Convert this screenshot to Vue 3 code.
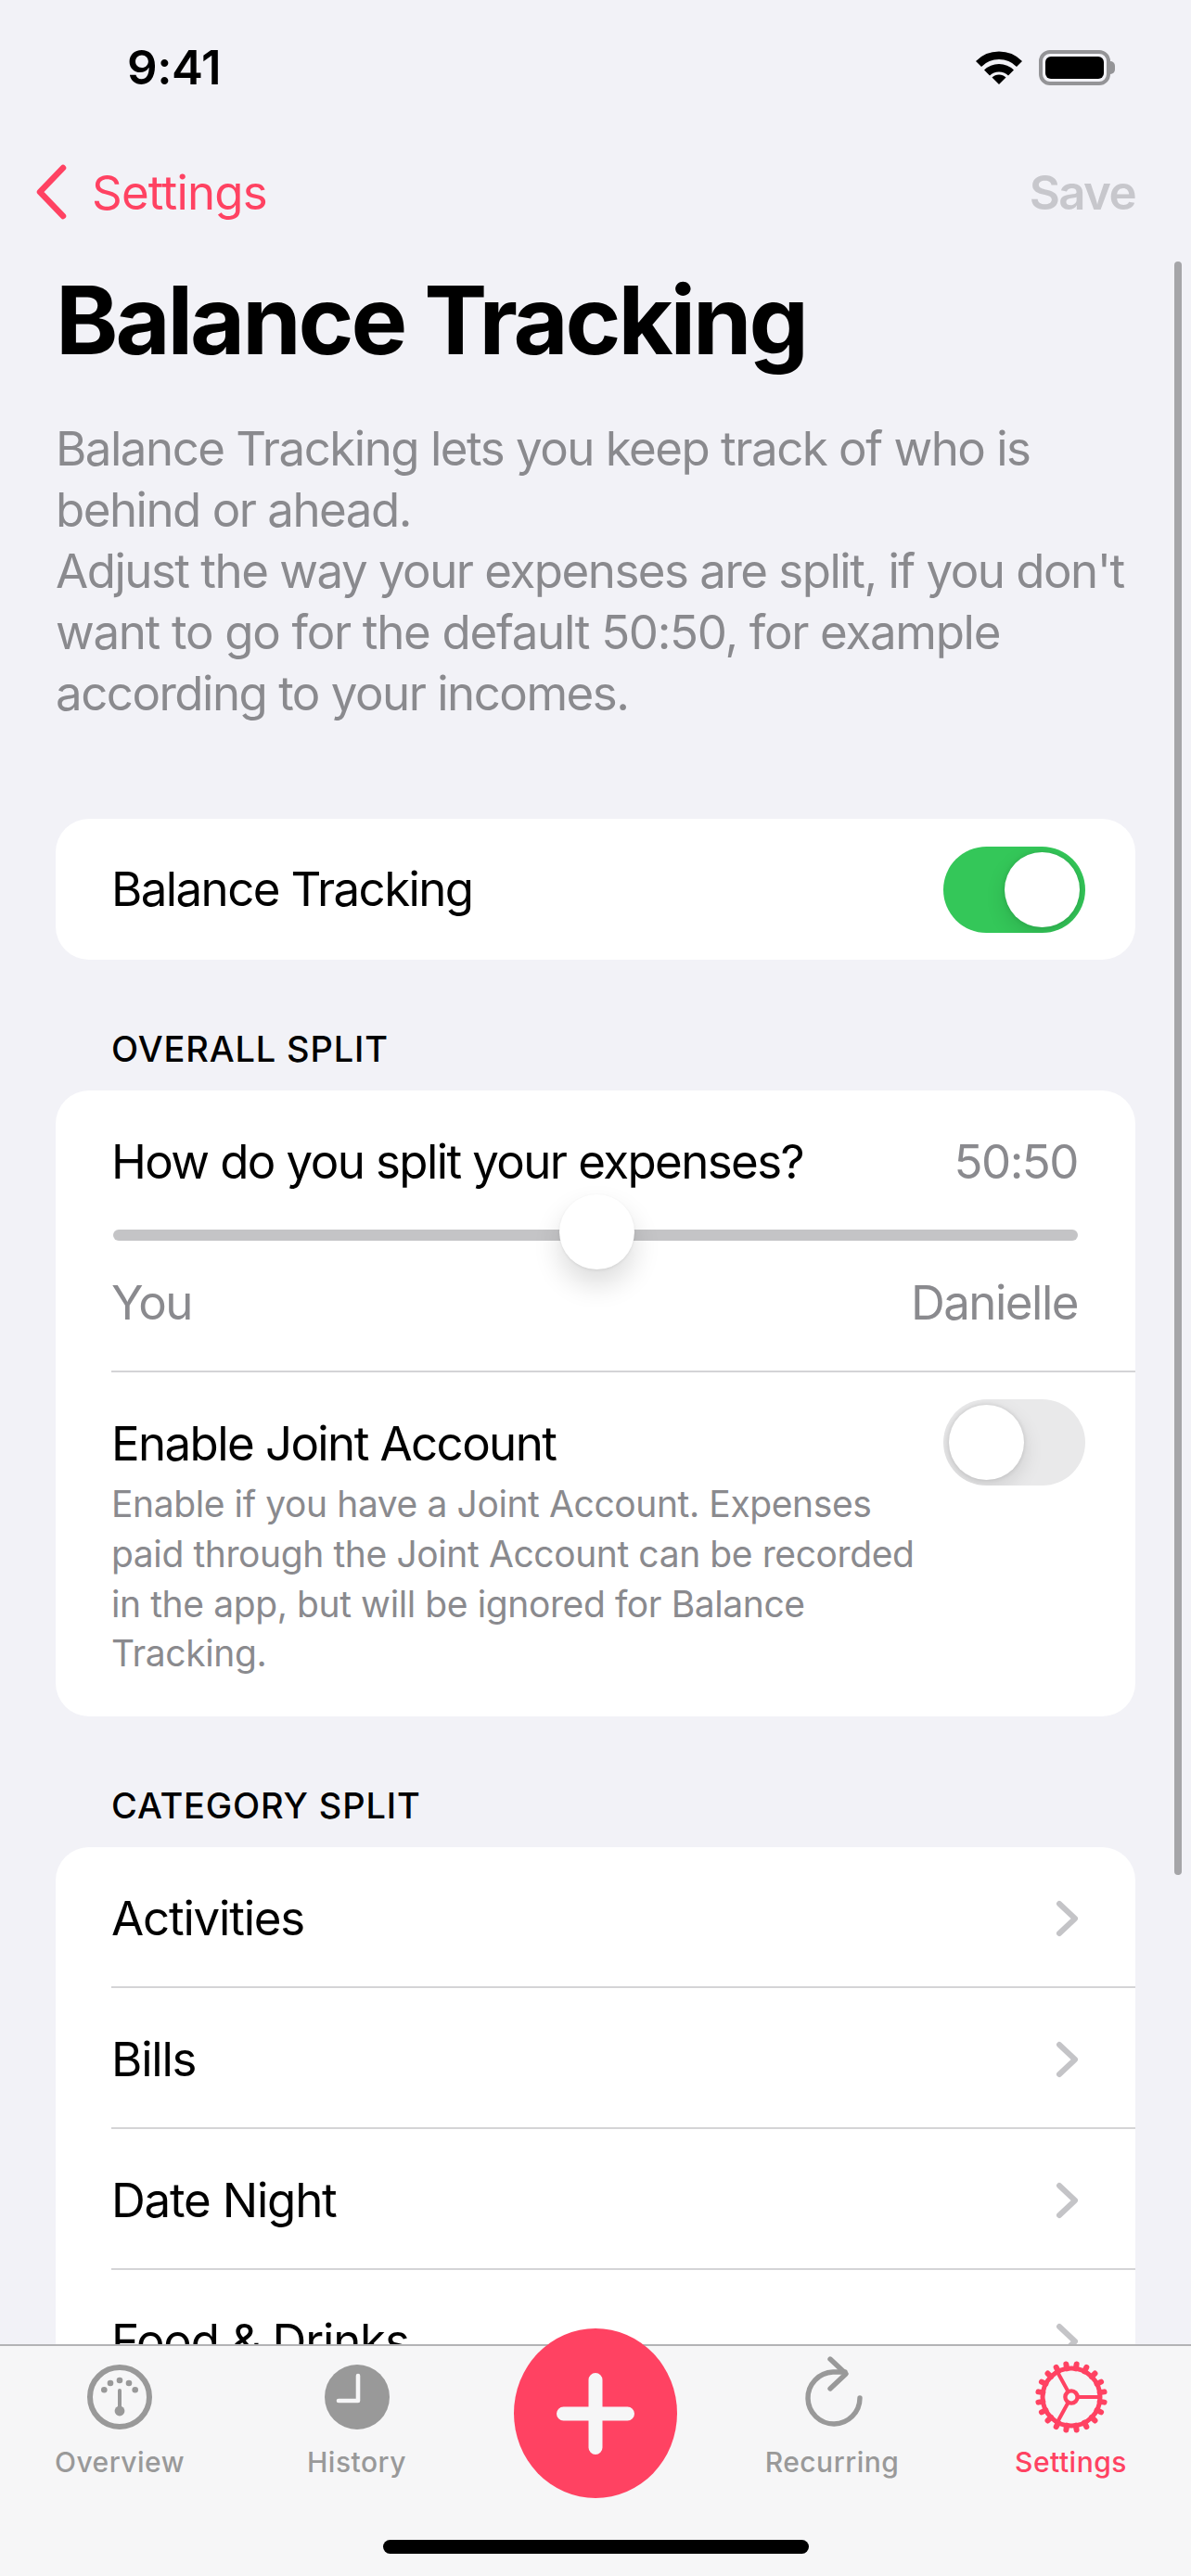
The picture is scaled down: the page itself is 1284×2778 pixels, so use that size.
<script setup>
const description = [
  { text: 'Balance Tracking lets you keep track of who is', wide: false },
  { text: 'behind or ahead.', wide: false },
  { text: "Adjust the way your expenses are split, if you don't", wide: false },
  { text: 'want to go for the default 50:50, for example', wide: true },
  { text: 'according to your incomes.', wide: false }
]
const jointLines = [
  'Enable if you have a Joint Account. Expenses',
  'paid through the Joint Account can be recorded',
  'in the app, but will be ignored for Balance',
  'Tracking.'
]
const categories = ['Activities', 'Bills', 'Date Night', 'Food & Drinks']
const gearTeeth = Array.from({ length: 20 }, (_, i) => (i + 0.5) * 18)
const gaugeDots = [[-16.7, -7.7], [-10, -15], [0, -18], [10, -15], [16.7, -7.7]]
</script>

<template>
  <div class="screen">
    <div class="status">
      <span class="time">9:41</span>
      <div class="status-icons">
        <svg class="wifi" viewBox="0 0 50 37" width="50" height="37">
          <path d="M3 15 A31 31 0 0 1 47 15" fill="none" stroke="#000" stroke-width="8.5" />
          <path d="M12 24.5 A18.5 18.5 0 0 1 38 24.5" fill="none" stroke="#000" stroke-width="8.5" />
          <path d="M25 37 L17.5 29.5 A10.6 10.6 0 0 1 32.5 29.5 Z" fill="#000" />
        </svg>
        <div class="battery"><div class="battery-fill"></div></div>
      </div>
    </div>

    <div class="nav">
      <div class="back">
        <svg viewBox="0 0 36 60" width="36" height="60">
          <path d="M31 4 L6 30 L31 56" fill="none" stroke="#ff4262" stroke-width="6.5" stroke-linecap="round" stroke-linejoin="round" />
        </svg>
        <span>Settings</span>
      </div>
      <span class="save">Save</span>
    </div>

    <h1 class="title">Balance Tracking</h1>

    <p class="desc">
      <span v-for="line in description" :key="line.text" :class="{ wide: line.wide }">{{ line.text }}</span>
    </p>

    <div class="card row-single">
      <span class="label">Balance Tracking</span>
      <div class="toggle on"><div class="knob"></div></div>
    </div>

    <div class="section">OVERALL SPLIT</div>
    <div class="card">
      <div class="split">
        <div class="split-head">
          <span class="label">How do you split your expenses?</span>
          <span class="muted">50:50</span>
        </div>
        <div class="slider">
          <div class="track"></div>
          <div class="thumb"></div>
        </div>
        <div class="split-foot">
          <span class="muted">You</span>
          <span class="muted">Danielle</span>
        </div>
      </div>
      <div class="joint">
        <div class="joint-text">
          <div class="label">Enable Joint Account</div>
          <div class="joint-sub">
            <span v-for="line in jointLines" :key="line">{{ line }}</span>
          </div>
        </div>
        <div class="toggle off"><div class="knob"></div></div>
      </div>
    </div>

    <div class="section">CATEGORY SPLIT</div>
    <div class="card">
      <div v-for="(c, i) in categories" :key="c" class="cat" :class="{ first: i === 0 }">
        <span class="label">{{ c }}</span>
        <svg viewBox="0 0 26 40" width="26" height="40">
          <path d="M4 4 L21 20 L4 36" fill="none" stroke="#c4c4c7" stroke-width="6" stroke-linecap="round" stroke-linejoin="round" />
        </svg>
      </div>
    </div>

    <div class="scrollbar"></div>

    <div class="tabbar">
      <div class="tab">
        <svg viewBox="-36 -36 72 72" width="72" height="72">
          <circle r="32" fill="none" stroke="#999" stroke-width="6" />
          <circle v-for="d in gaugeDots" :key="d[0]" :cx="d[0]" :cy="d[1]" r="3.3" fill="#999" />
          <path d="M0 -7 L0 14" stroke="#999" stroke-width="4" stroke-linecap="round" />
          <circle cy="15" r="5.4" fill="#999" />
        </svg>
        <span>Overview</span>
      </div>
      <div class="tab">
        <svg viewBox="-36 -36 72 72" width="72" height="72">
          <circle r="35" fill="#999" />
          <path d="M1 -23 L1 4 L-20 4" fill="none" stroke="#f6f6f7" stroke-width="4.6" stroke-linecap="round" stroke-linejoin="round" />
        </svg>
        <span>History</span>
      </div>
      <div class="tab"></div>
      <div class="tab">
        <svg viewBox="-36 -36 72 72" width="72" height="72">
          <path d="M30 1 A28 28 0 1 1 1 -27 L14 -27" fill="none" stroke="#999" stroke-width="5.4" stroke-linecap="round" />
          <path d="M-2 -41 L15 -25 L-2 -9" fill="none" stroke="#999" stroke-width="5.4" stroke-linecap="round" stroke-linejoin="round" />
        </svg>
        <span>Recurring</span>
      </div>
      <div class="tab active">
        <svg viewBox="-39 -39 78 78" width="78" height="78" class="gear">
          <g fill="none" stroke="#ff4262">
            <circle r="31" stroke-width="5" />
            <path v-for="a in gearTeeth" :key="a" d="M0 -31 L0 -36" stroke-width="6" stroke-linecap="round" :transform="`rotate(${a})`" />
            <path d="M7 0 L30 0 M-3.5 -6 L-15 -27 M-3.5 6 L-15 27" stroke-width="4" />
            <circle r="6.6" stroke-width="4.4" />
          </g>
        </svg>
        <span>Settings</span>
      </div>
    </div>

    <div class="fab">
      <svg viewBox="0 0 84 88" width="84" height="88">
        <path d="M42 7.5 L42 80.5 M7.5 44 L76.5 44" stroke="#f6f6f7" stroke-width="15" stroke-linecap="round" />
      </svg>
    </div>

    <div class="home"></div>
  </div>
</template>

<style>
html, body { margin: 0; background: #f2f2f7; }
</style>

<style scoped>
.screen {
  position: relative;
  width: 1284px;
  height: 2778px;
  overflow: hidden;
  background: #f2f2f7;
  font-family: Inter, "Noto Sans", sans-serif;
  color: #000;
}
.status {
  display: flex;
  justify-content: space-between;
  align-items: center;
  height: 53px;
  padding: 46px 87px 0 137px;
}
.time { font-size: 51px; font-weight: 600; letter-spacing: -0.4px; }
.status-icons { display: flex; align-items: center; gap: 18px; }
.wifi { display: block; }
.battery {
  position: relative;
  box-sizing: border-box;
  width: 77px;
  height: 38px;
  border: 4px solid #949497;
  border-radius: 12px;
  padding: 3px;
}
.battery::after {
  content: "";
  position: absolute;
  left: 73px;
  top: 8px;
  width: 5px;
  height: 14px;
  background: #949497;
  border-radius: 0 5px 5px 0;
}
.battery-fill { width: 100%; height: 100%; background: #000; border-radius: 6px; }
.nav {
  display: flex;
  justify-content: space-between;
  align-items: center;
  height: 60px;
  margin-top: 78px;
  padding: 0 60px 0 37px;
  font-size: 51px;
}
.back { display: flex; align-items: center; gap: 26px; color: #ff4262; letter-spacing: -0.8px; }
.save { color: #c7c7cc; font-weight: 600; letter-spacing: -1.6px; }
.title {
  margin: 48px 0 0;
  padding-left: 60px;
  font-size: 102px;
  line-height: 120px;
  font-weight: 700;
  letter-spacing: -3.1px;
}
.desc {
  margin: 46px 0 0;
  padding-left: 60px;
  color: #8a8a8e;
  font-size: 51px;
  line-height: 66px;
  letter-spacing: -1.5px;
}
.desc span { display: block; }
.desc span.wide { letter-spacing: -1.3px; }
.card {
  margin: 0 60px;
  background: #fff;
  border-radius: 36px;
  overflow: hidden;
}
.row-single {
  margin-top: 102px;
  height: 152px;
  display: flex;
  align-items: center;
  justify-content: space-between;
  padding: 0 54px 0 60px;
}
.label { font-size: 51px; line-height: 62px; letter-spacing: -1.6px; }
.toggle {
  position: relative;
  flex: none;
  box-sizing: border-box;
  width: 153px;
  height: 93px;
  border-radius: 47px;
  padding: 6px;
  overflow: hidden;
}
.toggle.on { background: #34c759; display: flex; justify-content: flex-end; }
.toggle.off { background: #e9e9ea; }
.knob {
  width: 81px;
  height: 81px;
  border-radius: 50%;
  background: #fff;
  box-shadow: 0 8px 22px rgba(0, 0, 0, 0.12), 0 0 5px rgba(0, 0, 0, 0.12);
}
.section {
  margin: 74px 0 22px 120px;
  height: 45px;
  line-height: 45px;
  font-size: 38px;
  font-weight: 500;
  letter-spacing: 0.85px;
}
.split { padding: 46px 62px 0 60px; height: 302px; box-sizing: border-box; position: relative; }
.split-head, .split-foot { display: flex; justify-content: space-between; align-items: center; }
.muted { color: #8a8a8e; font-size: 51px; line-height: 62px; letter-spacing: -1.5px; }
.slider { position: relative; height: 12px; margin: 42px 0 0 2px; }
.track { height: 12px; background: #c4c4c6; border-radius: 6px; }
.thumb {
  position: absolute;
  left: 481px;
  top: -38px;
  width: 81px;
  height: 81px;
  border-radius: 50%;
  background: #fff;
  box-shadow: 0 16px 30px rgba(0, 0, 0, 0.14), 0 1px 3px rgba(0, 0, 0, 0.08);
}
.split-foot { margin-top: 36px; }
.joint {
  margin-left: 60px;
  border-top: 2px solid #d4d4d6;
  display: flex;
  justify-content: space-between;
  align-items: flex-start;
  padding: 29px 54px 0 0;
  height: 342px;
}
.joint-text { margin-top: 17px; }
.joint-sub { margin-top: 7px; color: #8a8a8e; font-size: 39px; line-height: 53.8px; letter-spacing: -0.4px; }
.joint-sub span { display: block; }
.cat {
  margin-left: 60px;
  height: 147px;
  padding: 3px 60px 0 0;
  border-top: 2px solid #d4d4d6;
  display: flex;
  align-items: center;
  justify-content: space-between;
}
.cat .label { letter-spacing: -1.2px; }
.cat.first { border-top: none; }
.scrollbar {
  position: absolute;
  left: 1266px;
  top: 282px;
  width: 8px;
  height: 1740px;
  border-radius: 4px;
  background: #a5a5a8;
}
.tabbar {
  position: absolute;
  left: 0;
  right: 0;
  top: 2528px;
  bottom: 0;
  box-sizing: border-box;
  border-top: 2px solid #b3b3b5;
  background: #f6f6f7;
  display: grid;
  grid-template-columns: 258px 253px 262px 248px 1fr;
  padding-top: 19px;
}
.tab {
  display: flex;
  flex-direction: column;
  align-items: center;
  color: #999;
  font-size: 30px;
  font-weight: 500;
  letter-spacing: 0.5px;
}
.tab span { margin-top: 15px; line-height: 38px; }
.tab svg { overflow: visible; display: block; }
.tab svg.gear { margin: -3px 0; }
.tab.active { color: #ff4262; padding-left: 4px; }
.fab {
  position: absolute;
  left: 554px;
  top: 2511px;
  width: 176px;
  height: 183px;
  border-radius: 50%;
  background: #ff4262;
  display: flex;
  align-items: center;
  justify-content: center;
}
.home {
  position: absolute;
  left: 413px;
  top: 2739px;
  width: 459px;
  height: 15px;
  border-radius: 8px;
  background: #000;
}
</style>
